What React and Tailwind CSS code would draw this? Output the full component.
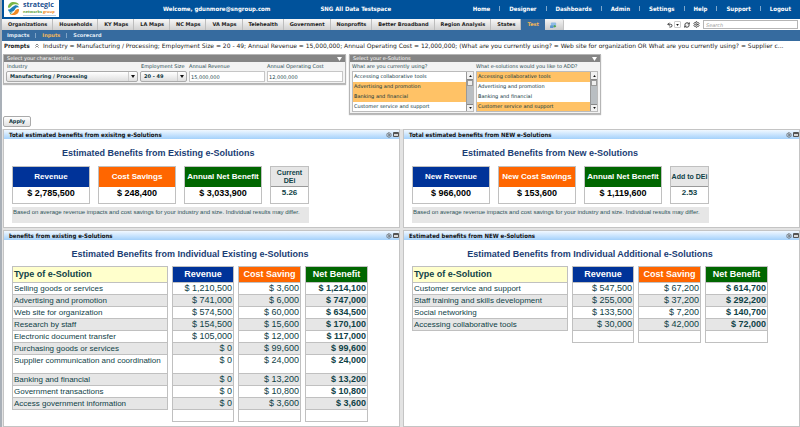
import React from "react";
import { Settings, RefreshCw, Undo2 } from "lucide-react";

const NAV = ["Home", "Designer", "Dashboards", "Admin", "Settings", "Help", "Support", "Logout"];
const TABS = [
  "Organizations", "Households", "KY Maps", "LA Maps", "NC Maps", "VA Maps", "Telehealth",
  "Government", "Nonprofits", "Better Broadband", "Region Analysis", "States",
];
const SOLUTIONS = [
  "Accessing collaborative tools",
  "Advertising and promotion",
  "Banking and financial",
  "Customer service and support",
];

const EXISTING = [
  ["Selling goods or services", "$ 1,210,500", "$ 3,600", "$ 1,214,100"],
  ["Advertising and promotion", "$ 741,000", "$ 6,000", "$ 747,000"],
  ["Web site for organization", "$ 574,500", "$ 60,000", "$ 634,500"],
  ["Research by staff", "$ 154,500", "$ 15,600", "$ 170,100"],
  ["Electronic document transfer", "$ 105,000", "$ 12,000", "$ 117,000"],
  ["Purchasing goods or services", "$ 0", "$ 99,600", "$ 99,600"],
  ["Supplier communication and coordination", "$ 0", "$ 24,000", "$ 24,000"],
  ["Banking and financial", "$ 0", "$ 13,200", "$ 13,200"],
  ["Government transactions", "$ 0", "$ 10,800", "$ 10,800"],
  ["Access government information", "$ 0", "$ 3,600", "$ 3,600"],
];
const ADDITIONAL = [
  ["Customer service and support", "$ 547,500", "$ 67,200", "$ 614,700"],
  ["Staff training and skills development", "$ 255,000", "$ 37,200", "$ 292,200"],
  ["Social networking", "$ 133,500", "$ 7,200", "$ 140,700"],
  ["Accessing collaborative tools", "$ 30,000", "$ 42,000", "$ 72,000"],
];

function Logo() {
  return (
    <div className="flex h-[17px] w-[55px] shrink-0 items-center gap-[3px] self-start bg-white pl-[3px]">
      <svg viewBox="0 0 14 16" className="h-[15px] w-[13px] shrink-0" aria-hidden="true">
        <path d="M1 7C1 3 4 1 7 1c3 0 5 1 6 3-3-1-6-1-8 1-1 1-2 3-4 2z" fill="#7ab648" />
        <path d="M1 9c2 1 4-3 7-4 2-1 4 0 5 2-3-1-4 1-5 3-2 2-6 3-7-1z" fill="#1e7fb8" />
        <path d="M3 14c4 0 5-2 6-4 1-1 3-2 4-1 0 4-3 6-6 6-2 0-3 0-4-1z" fill="#f08a24" />
        <path d="M2 12c2 1 4 0 5-1l-3 3z" fill="#17906f" />
      </svg>
      <div className="flex flex-col whitespace-nowrap font-['Open_Sans',sans-serif]">
        <span className="text-[7px] font-bold leading-[8px] text-[#1b4f8f]">strategic</span>
        <span className="text-[4px] leading-[6px] text-[#5a9e3a]">
          networks <span className="text-[#f08a24]">group</span>
        </span>
        <span className="h-px w-[33px] bg-[#b9cfe2]" />
      </div>
    </div>
  );
}

function TopBar() {
  return (
    <header className="flex h-[19px] items-center bg-[#00529b] pl-[2px] pr-[9px] font-['DejaVu_Sans_Condensed','DejaVu_Sans',sans-serif] text-[6px] font-bold leading-[15px] text-white">
      <Logo />
      <span className="ml-[104px] whitespace-nowrap pb-[3px]">Welcome, gdunmore@sngroup.com</span>
      <span className="ml-[50px] whitespace-nowrap pb-[3px]">SNG All Data Testspace</span>
      <nav className="ml-auto flex items-center gap-[9px] pb-[3px]">
        {NAV.map((item, i) => (
          <React.Fragment key={item}>
            {i > 0 && <span className="h-[5px] w-px bg-[#7fa8cd]" />}
            <a href="#" className="whitespace-nowrap">{item}</a>
          </React.Fragment>
        ))}
      </nav>
    </header>
  );
}

function TabBar() {
  return (
    <div className="flex h-[11px] items-stretch bg-white font-['DejaVu_Sans',sans-serif] text-[5px] font-bold text-[#222222]">
      <nav className="flex items-stretch">
        {TABS.map((tab) => (
          <a
            key={tab}
            href="#"
            className="flex items-center whitespace-nowrap border-r border-[#bdbdbd] bg-gradient-to-b from-[#f8f8f8] to-[#d0d0d0] pl-[6px] pr-[5px]"
          >
            {tab}
          </a>
        ))}
        <a href="#" className="flex items-center bg-[#366b9f] px-[6px] text-[#f3b75a]">Test</a>
        <a
          href="#"
          aria-label="New tab"
          className="flex w-[19px] items-center justify-center rounded-tr-[2px] border-r border-[#c4c4c4] bg-gradient-to-b from-[#f4f4f4] to-[#cccccc]"
        >
          <svg viewBox="0 0 8 7" className="h-[6px] w-[7px]" aria-hidden="true">
            <rect x="1" y="0.5" width="6" height="5" rx="1" fill="#8fbbe6" />
            <rect x="0" y="4" width="4" height="3" fill="#5c96cf" />
            <path d="M5 3.5h1v1h1v1H6v1H5v-1H4v-1h1z" fill="#4aa23c" />
          </svg>
        </a>
      </nav>
      <div className="ml-auto flex items-center gap-[3px] pr-[2px] text-[#444444]">
        <div className="flex items-center">
          <button type="button" aria-label="Undo" className="flex h-[7px] w-[8px] items-center justify-center">
            <Undo2 size={6} strokeWidth={4} />
          </button>
          <button type="button" aria-label="Undo history" className="flex h-[7px] w-[7px] items-center justify-center rounded-[1px] border border-[#cccccc]">
            <svg viewBox="0 0 4 3" className="h-[2px] w-[3px]" aria-hidden="true"><path d="M0 0h4L2 3z" fill="#111" /></svg>
          </button>
        </div>
        <button type="button" aria-label="Refresh"><RefreshCw size={6} strokeWidth={4} /></button>
        <button type="button" aria-label="Options"><Settings size={7} strokeWidth={3} /></button>
        <input
          type="search"
          aria-label="Search"
          placeholder="Search"
          className="h-[9px] w-[95px] border border-[#b5b5b5] bg-white px-[2px] text-[5px] font-normal italic leading-[7px] placeholder:text-[#999999]"
        />
      </div>
    </div>
  );
}

function SubNav() {
  return (
    <nav className="flex h-[11px] items-center gap-[6px] bg-[#366b9f] pl-[5px] font-['DejaVu_Sans',sans-serif] text-[5px] font-bold text-[#e3edf6]">
      <a href="#">Impacts</a>
      <span className="h-[5px] w-px bg-[#7fa3c6]" />
      <a href="#" className="text-[#f3b75a]">Inputs</a>
      <span className="h-[5px] w-px bg-[#7fa3c6]" />
      <a href="#">Scorecard</a>
    </nav>
  );
}

function Prompts() {
  return (
    <div className="flex h-[13px] items-center whitespace-nowrap pb-[3px] pl-[2px] font-['DejaVu_Sans',sans-serif] text-[6px] leading-[10px] text-[#222222]">
      <span className="w-[31px] font-['DejaVu_Sans_Condensed','DejaVu_Sans',sans-serif] font-bold">Prompts</span>
      <svg viewBox="0 0 4 5" className="mr-[4px] h-[4px] w-[4px]" aria-hidden="true">
        <path d="M0 2l2-2 2 2M0 4.500l2-2 2 2" fill="none" stroke="#444" strokeWidth="0.8" />
      </svg>
      <p className="min-w-0 flex-1">
        Industry = Manufacturing / Processing; Employment Size = 20 - 49; Annual Revenue = 15,000,000; Annual
        Operating Cost = 12,000,000; (What are you currently using? = Web site for organization OR What are you
        currently using? = Supplier c...
      </p>
    </div>
  );
}

function PromptBox({ title, children }) {
  return (
    <section className="shrink-0 border border-[#b5b5b5] bg-[#f3f3f3] shadow-[0_1px_1px_#bbbbbb]">
      <h2 className="flex h-[7px] items-center justify-between bg-[#858585] px-[3px] text-[5px] leading-[7px] text-white">
        {title}
        <svg viewBox="0 0 5 4" className="h-[4px] w-[5px]" aria-hidden="true"><path d="M0 0h5L2.500 4z" fill="#fff" /></svg>
      </h2>
      <div className="flex gap-[2px] px-[2px] pb-px">{children}</div>
    </section>
  );
}

function Dropdown({ label, value, className }) {
  return (
    <label className={className}>
      <span className="block h-[9px] whitespace-nowrap pl-px leading-[9px]">{label}</span>
      <span className="relative block">
        <select
          defaultValue={value}
          className="block h-[11px] w-full appearance-none rounded-[2px] border border-[#aaaaaa] bg-gradient-to-b from-white to-[#dfdfdf] pl-[3px] text-[5px] font-bold leading-[9px] text-[#0b333c]"
        >
          <option>{value}</option>
        </select>
        <span className="pointer-events-none absolute inset-y-px right-px flex w-[9px] items-center justify-center border-l border-[#cccccc]">
          <svg viewBox="0 0 4 3" className="h-[3px] w-[4px]" aria-hidden="true"><path d="M0 0h4L2 3z" fill="#111" /></svg>
        </span>
      </span>
    </label>
  );
}

function TextField({ label, value }) {
  return (
    <label className="w-[76px]">
      <span className="block h-[9px] whitespace-nowrap leading-[9px]">{label}</span>
      <input
        defaultValue={value}
        className="block h-[11px] w-full border border-[#c6c6c6] bg-white px-px text-[5px] leading-[9px]"
      />
    </label>
  );
}

function ListBox({ label, selected }) {
  return (
    <label className="w-[122px]">
      <span className="block h-[9px] whitespace-nowrap leading-[9px]">{label}</span>
      <span className="flex h-[41px] border border-[#bbbbbb] bg-white">
        <select
          multiple
          size={4}
          defaultValue={selected}
          className="h-full min-w-0 flex-1 appearance-none overflow-hidden border-0 bg-white p-0 text-[5px]"
        >
          {SOLUTIONS.map((item) => (
            <option
              key={item}
              className="block h-[10px] min-h-0 px-px pb-0 pt-px leading-[9px] text-[#0b333c] checked:bg-[linear-gradient(#ffc266,#ffc266)]"
            >
              {item}
            </option>
          ))}
        </select>
        <span className="flex w-[7px] flex-col items-stretch border-l border-[#999999] bg-[#b9bec2]" aria-hidden="true">
          <span className="flex h-[8px] items-center justify-center border-b border-[#888888] bg-[#f1f1f1]">
            <svg viewBox="0 0 4 3" className="h-[2px] w-[3px]"><path d="M0 3h4L2 0z" fill="#111" /></svg>
          </span>
          <span className="h-[6px] border border-[#999999] bg-[#eeeeee]" />
          <span className="mt-auto flex h-[7px] items-center justify-center border-t border-[#888888] bg-[#f1f1f1]">
            <svg viewBox="0 0 4 3" className="h-[2px] w-[3px]"><path d="M0 0h4L2 3z" fill="#111" /></svg>
          </span>
        </span>
      </span>
    </label>
  );
}

function Inputs() {
  return (
    <form
      className="pl-px font-['DejaVu_Sans',sans-serif] text-[5px] text-[#24474e]"
      onSubmit={(e) => e.preventDefault()}
    >
      <div className="flex items-start gap-[3px]">
        <PromptBox title="Select your characteristics">
          <Dropdown label="Industry" value="Manufacturing / Processing" className="w-[132px]" />
          <Dropdown label="Employment Size" value="20 - 49" className="w-[47px]" />
          <TextField label="Annual Revenue" value="15,000,000" />
          <TextField label="Annual Operating Cost" value="12,000,000" />
        </PromptBox>
        <PromptBox title="Select your e-Solutions">
          <ListBox label="What are you currently using?" selected={[SOLUTIONS[1], SOLUTIONS[2]]} />
          <ListBox label="What e-solutions would you like to ADD?" selected={[SOLUTIONS[0], SOLUTIONS[3]]} />
        </PromptBox>
      </div>
      <button
        type="submit"
        className="mt-[2px] flex h-[11px] w-[28px] items-center justify-center rounded-[2px] border border-[#aaaaaa] bg-gradient-to-b from-white to-[#e2e2e2] font-bold text-[#0b333c]"
      >
        Apply
      </button>
    </form>
  );
}

function Panel({ title, children }) {
  return (
    <section className="flex min-w-0 flex-col border border-[#c4c4c4] bg-white">
      <h2 className="flex h-[9px] items-center justify-between bg-gradient-to-b from-[#f1f8ff] to-[#a4d1fb] pl-[5px] font-['DejaVu_Sans_Condensed','DejaVu_Sans',sans-serif] text-[6px] font-bold leading-[9px] text-[#111111]">
        <span className="whitespace-nowrap">{title}</span>
        <span className="flex items-center gap-px text-[#666666]">
          <button type="button" aria-label="Panel options"><Settings size={6} strokeWidth={3} /></button>
          <button type="button" aria-label="Maximize panel" className="h-[5px] w-[6px] rounded-[1px] border border-t-2 border-[#555555] bg-[#d8d8d8]" />
        </span>
      </h2>
      <div className="flex-1 px-[8px] font-['Liberation_Sans',Arial,sans-serif]">{children}</div>
    </section>
  );
}

function Card({ title, value, color }) {
  return (
    <div className="w-[78px] border border-[#c0c0c0] text-center font-bold">
      <div className={`flex h-[20px] items-center justify-center whitespace-nowrap text-[8px] text-white ${color}`}>{title}</div>
      <div className="h-[16px] text-[9px] leading-[13px] text-black">{value}</div>
    </div>
  );
}

function Summary({ panel, title, cards, deiTitle, dei }) {
  return (
    <Panel title={panel}>
      <h3 className="pl-[50px] pt-[8px] text-[9px] font-bold leading-[12px] text-[#1a3d74]">{title}</h3>
      <div className="mt-[7px] flex gap-[8px]">
        <Card title={cards[0][0]} value={cards[0][1]} color="bg-[#003399]" />
        <Card title={cards[1][0]} value={cards[1][1]} color="bg-[#ff6600]" />
        <Card title={cards[2][0]} value={cards[2][1]} color="bg-[#006600]" />
        <div className="w-[39px] border border-[#c0c0c0] text-center font-bold text-[#0f4247]">
          <div className="flex h-[20px] items-center justify-center border-b border-[#999999] bg-[#e6e6e6] text-[7px] leading-[8px]">
            {deiTitle}
          </div>
          <div className="h-[16px] text-[8px] leading-[12px]">{dei}</div>
        </div>
      </div>
      <p className="mb-[4px] mt-[3px] h-[16px] w-[297px] whitespace-nowrap bg-[#e6e6e6] pl-px text-[6px] leading-[10px] text-[#2c5459]">
        Based on average revenue impacts and cost savings for your industry and size. Individual results may differ.
      </p>
    </Panel>
  );
}

function Detail({ panel, title, rows, tallRow }) {
  const cell = "border-x border-b border-[#c0c0c0] px-px py-0 align-top";
  return (
    <Panel title={panel}>
      <div className="w-[356px] pt-[8px]">
        <h3 className="text-center text-[9px] font-bold leading-[12px] text-[#1a3d74]">{title}</h3>
        <table className="-mx-[4px] mt-[6px] w-[364px] table-fixed border-separate border-spacing-x-[4px] border-spacing-y-0 text-[9px] leading-[11px] text-[#0f4247]">
          <colgroup>
            <col className="w-[156px]" />
            <col className="w-[62px]" />
            <col className="w-[63px]" />
            <col className="w-[63px]" />
          </colgroup>
          <thead>
            <tr className="h-[17px] text-white">
              <th className="border border-[#c0c0c0] bg-[#ffffcc] px-px py-0 text-left text-[#0f4247]">Type of e-Solution</th>
              <th className="border border-[#c0c0c0] bg-[#003399] p-0">Revenue</th>
              <th className="whitespace-nowrap border border-[#c0c0c0] bg-[#ff6600] p-0">Cost Saving</th>
              <th className="whitespace-nowrap border border-[#c0c0c0] bg-[#006600] p-0">Net Benefit</th>
            </tr>
          </thead>
          <tbody>
            {rows.map((row, i) => (
              <tr key={row[0]} className={i === tallRow ? "h-[19px]" : "h-[12px]"}>
                <td className={`${cell} whitespace-nowrap text-[8px] ${i % 2 ? "bg-[#e6e6e6]" : ""}`}>{row[0]}</td>
                <td className={`${cell} text-right ${i % 2 ? "bg-[#e6e6e6]" : ""}`}>{row[1]}</td>
                <td className={`${cell} text-right ${i % 2 ? "bg-[#e6e6e6]" : ""}`}>{row[2]}</td>
                <td className={`${cell} text-right font-bold ${i % 2 ? "bg-[#e6e6e6]" : ""}`}>{row[3]}</td>
              </tr>
            ))}
            <tr className="h-[12px]">
              <td className="p-0" />
              <td className={cell} />
              <td className={cell} />
              <td className={cell} />
            </tr>
          </tbody>
        </table>
      </div>
    </Panel>
  );
}

export default function App() {
  return (
    <div className="flex min-h-screen flex-col overflow-hidden border-l-2 border-[#a9b0b8] bg-white">
      <TopBar />
      <TabBar />
      <SubNav />
      <Prompts />
      <Inputs />
      <main className="mt-[2px] grid flex-1 grid-cols-2 grid-rows-[auto_1fr] gap-x-[3px] gap-y-[2px] bg-[#e3e3e3] pl-px">
        <Summary
          panel="Total estimated benefits from exisitng e-Solutions"
          title="Estimated Benefits from Existing e-Solutions"
          cards={[["Revenue", "$ 2,785,500"], ["Cost Savings", "$ 248,400"], ["Annual Net Benefit", "$ 3,033,900"]]}
          deiTitle="Current DEi"
          dei="5.26"
        />
        <Summary
          panel="Total estimated benefits from NEW e-Solutions"
          title="Estimated Benefits from New e-Solutions"
          cards={[["New Revenue", "$ 966,000"], ["New Cost Savings", "$ 153,600"], ["Annual Net Benefit", "$ 1,119,600"]]}
          deiTitle="Add to DEi"
          dei="2.53"
        />
        <Detail
          panel="benefits from existing e-Solutions"
          title="Estimated Benefits from Individual Existing e-Solutions"
          rows={EXISTING}
          tallRow={6}
        />
        <Detail
          panel="Estimated benefits from NEW e-Solutions"
          title="Estimated Benefits from Individual Additional e-Solutions"
          rows={ADDITIONAL}
        />
      </main>
    </div>
  );
}
